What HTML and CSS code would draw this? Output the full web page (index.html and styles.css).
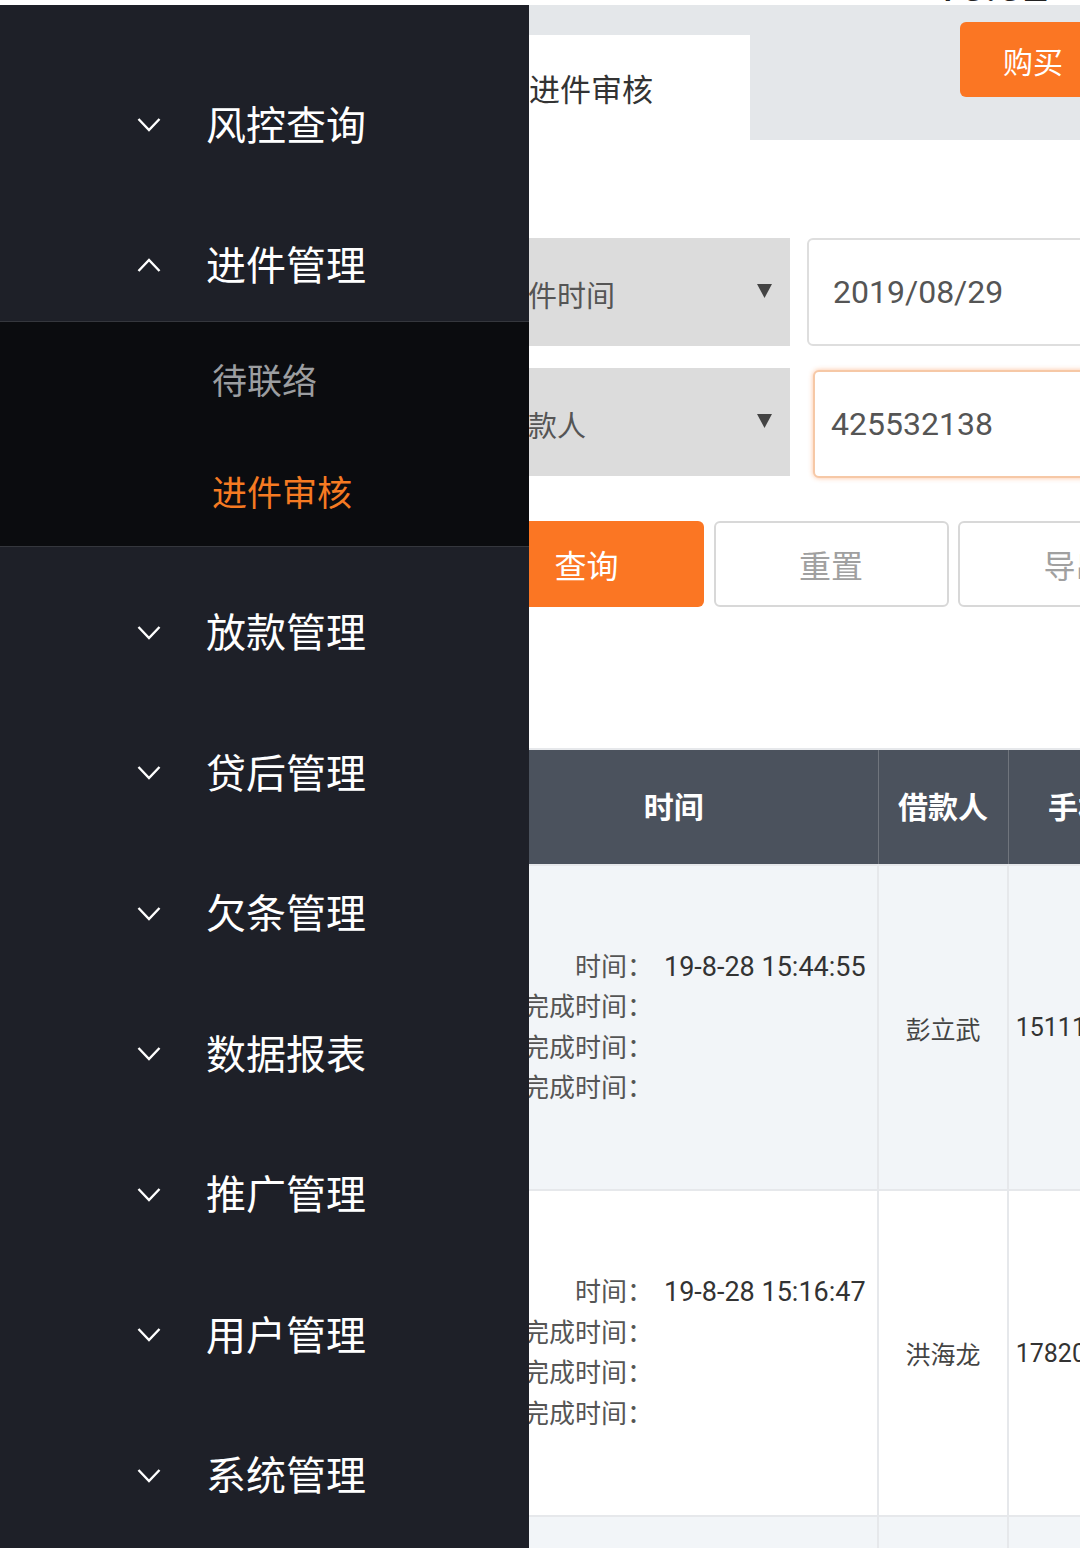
FILE: index.html
```html
<!DOCTYPE html>
<html lang="zh-CN">
<head>
<meta charset="utf-8">
<title>进件审核</title>
<link rel="stylesheet" href="styles.css">
</head>
<body>
<div class="status"><span class="clock">15:52</span></div>
<div class="app">
  <main class="main">
    <header class="tabs">
      <div class="tab">进件审核</div>
      <button class="buy">购买</button>
    </header>

    <section class="filters">
      <div class="frow">
        <div class="select"><span>进件时间</span><svg class="caret" width="15" height="14" viewBox="0 0 15 14"><path d="M0 0 H15 L7.5 14 Z" fill="#444"/></svg></div>
        <div class="input">2019/08/29</div>
      </div>
      <div class="frow second">
        <div class="select"><span>借款人</span><svg class="caret" width="15" height="14" viewBox="0 0 15 14"><path d="M0 0 H15 L7.5 14 Z" fill="#444"/></svg></div>
        <div class="input focus">425532138</div>
      </div>
      <div class="actions">
        <button class="btn primary">查询</button>
        <button class="btn">重置</button>
        <button class="btn">导出</button>
      </div>
    </section>

    <table class="grid">
      <colgroup><col class="c1"><col class="c2"><col class="c3"><col class="c4"></colgroup>
      <thead>
        <tr><th>时间</th><th>借款人</th><th>手机号</th><th>状态</th></tr>
      </thead>
      <tbody>
        <tr class="odd">
          <td>
            <div class="info">
              <span class="lbl">时间：</span><span class="val">19-8-28 15:44:55</span>
              <span class="lbl">初审完成时间：</span><span class="val"></span>
              <span class="lbl">复审完成时间：</span><span class="val"></span>
              <span class="lbl">终审完成时间：</span><span class="val"></span>
            </div>
          </td>
          <td class="name">彭立武</td>
          <td class="num">15111563284</td>
          <td class="name">待审核</td>
        </tr>
        <tr class="even">
          <td>
            <div class="info">
              <span class="lbl">时间：</span><span class="val">19-8-28 15:16:47</span>
              <span class="lbl">初审完成时间：</span><span class="val"></span>
              <span class="lbl">复审完成时间：</span><span class="val"></span>
              <span class="lbl">终审完成时间：</span><span class="val"></span>
            </div>
          </td>
          <td class="name">洪海龙</td>
          <td class="num">17820451367</td>
          <td class="name">待审核</td>
        </tr>
        <tr class="odd">
          <td>
            <div class="info">
              <span class="lbl">时间：</span><span class="val">19-8-28 14:52:10</span>
              <span class="lbl">初审完成时间：</span><span class="val"></span>
              <span class="lbl">复审完成时间：</span><span class="val"></span>
              <span class="lbl">终审完成时间：</span><span class="val"></span>
            </div>
          </td>
          <td class="name">李明</td>
          <td class="num">13800238810</td>
          <td class="name">待审核</td>
        </tr>
      </tbody>
    </table>
  </main>

  <nav class="sidebar">
    <div class="mtitle"><svg class="chev" width="24" height="15" viewBox="0 0 24 15"><path d="M1.5 2 L12 13 L22.5 2" fill="none" stroke="#fff" stroke-width="2.4"/></svg><span>风控查询</span></div>
    <div class="mtitle"><svg class="chev" width="24" height="15" viewBox="0 0 24 15"><path d="M1.5 13 L12 2 L22.5 13" fill="none" stroke="#fff" stroke-width="2.4"/></svg><span>进件管理</span></div>
    <div class="submenu">
      <div class="sitem">待联络</div>
      <div class="sitem active">进件审核</div>
    </div>
    <div class="mtitle after"><svg class="chev" width="24" height="15" viewBox="0 0 24 15"><path d="M1.5 2 L12 13 L22.5 2" fill="none" stroke="#fff" stroke-width="2.4"/></svg><span>放款管理</span></div>
    <div class="mtitle"><svg class="chev" width="24" height="15" viewBox="0 0 24 15"><path d="M1.5 2 L12 13 L22.5 2" fill="none" stroke="#fff" stroke-width="2.4"/></svg><span>贷后管理</span></div>
    <div class="mtitle"><svg class="chev" width="24" height="15" viewBox="0 0 24 15"><path d="M1.5 2 L12 13 L22.5 2" fill="none" stroke="#fff" stroke-width="2.4"/></svg><span>欠条管理</span></div>
    <div class="mtitle"><svg class="chev" width="24" height="15" viewBox="0 0 24 15"><path d="M1.5 2 L12 13 L22.5 2" fill="none" stroke="#fff" stroke-width="2.4"/></svg><span>数据报表</span></div>
    <div class="mtitle"><svg class="chev" width="24" height="15" viewBox="0 0 24 15"><path d="M1.5 2 L12 13 L22.5 2" fill="none" stroke="#fff" stroke-width="2.4"/></svg><span>推广管理</span></div>
    <div class="mtitle"><svg class="chev" width="24" height="15" viewBox="0 0 24 15"><path d="M1.5 2 L12 13 L22.5 2" fill="none" stroke="#fff" stroke-width="2.4"/></svg><span>用户管理</span></div>
    <div class="mtitle"><svg class="chev" width="24" height="15" viewBox="0 0 24 15"><path d="M1.5 2 L12 13 L22.5 2" fill="none" stroke="#fff" stroke-width="2.4"/></svg><span>系统管理</span></div>
  </nav>
</div>
</body>
</html>
```

FILE: styles.css
```css
* { box-sizing: border-box; }

html, body {
  margin: 0;
  padding: 0;
}

body {
  width: 1080px;
  height: 1548px;
  overflow: hidden;
  background: #fff;
  font-family: Roboto, "Noto Sans CJK SC", sans-serif;
  color: #333;
}

.status {
  height: 5px;
  background: #fff;
  overflow: hidden;
  display: flex;
  justify-content: flex-end;
}

.clock {
  font-size: 46px;
  line-height: 46px;
  margin-top: -38px;
  margin-right: 32px;
  color: #222;
  flex: 0 0 auto;
}

.app {
  position: relative;
  height: 1543px;
  overflow: hidden;
}

/* ---------- main content ---------- */
.main {
  width: 1080px;
}

.tabs {
  height: 135px;
  background: #e4e7ea;
  display: flex;
  align-items: flex-start;
  overflow: hidden;
}

.tab {
  flex: 0 0 auto;
  margin-left: 469px;
  margin-top: 30px;
  width: 281px;
  height: 105px;
  background: #fff;
  padding-left: 60px;
  display: flex;
  align-items: center;
  font-size: 31px;
  color: #333;
}

.buy {
  flex: 0 0 146px;
  margin-left: 210px;
  margin-top: 17px;
  height: 75px;
  border: 0;
  border-radius: 6px;
  background: #fb7623;
  color: #fff;
  font-family: inherit;
  font-size: 30px;
  padding: 0;
}

.filters {
  margin-left: 469px;
  padding-top: 98px;
}

.frow {
  display: flex;
  height: 108px;
}

.frow.second {
  margin-top: 22px;
}

.select {
  flex: 0 0 321px;
  height: 108px;
  background: #dcdcdc;
  display: flex;
  align-items: center;
  justify-content: space-between;
  padding: 4px 18px 0 30px;
  font-size: 29px;
  color: #555;
}

.caret {
  margin-top: -6px;
}

.input {
  flex: 0 0 420px;
  margin-left: 17px;
  height: 108px;
  border: 2px solid #dedede;
  border-radius: 6px;
  background: #fff;
  display: flex;
  align-items: center;
  padding-left: 24px;
  font-size: 32px;
  color: #555;
}

.input.focus {
  margin-left: 23px;
  margin-top: 2px;
  border-color: #f6c8a6;
  box-shadow: 0 0 5px rgba(251, 118, 35, 0.45);
  padding-left: 16px;
}

.actions {
  display: flex;
  gap: 9.5px;
  margin-top: 45px;
  height: 86px;
}

.btn {
  flex: 0 0 235px;
  height: 86px;
  border: 2px solid #d8d8d8;
  border-radius: 6px;
  background: #fff;
  color: #a0a0a0;
  font-family: inherit;
  font-size: 32px;
  padding: 0;
}

.btn.primary {
  border: 0;
  background: #fb7623;
  color: #fff;
}

/* ---------- table ---------- */
.grid {
  margin-left: 469px;
  margin-top: 141px;
  border-collapse: collapse;
  table-layout: fixed;
  width: 908px;
  border-top: 2px solid #e6e8eb;
}

.c1 { width: 408px; }
.c2 { width: 130px; }
.c3 { width: 170px; }
.c4 { width: 200px; }

.grid th {
  height: 116px;
  background: #4b525d;
  color: #fff;
  font-size: 30px;
  font-weight: 700;
  text-align: center;
  padding: 0 0 5px;
  border-right: 1px solid #70757d;
}

.grid td {
  padding: 0;
  border: 2px solid #e6e8eb;
  text-align: center;
  vertical-align: middle;
  font-size: 25px;
  color: #444;
}

.grid tr.odd td { background: #f2f5f8; height: 325px; }
.grid tr.even td { background: #fff; height: 326px; }

.grid td.num {
  font-size: 25px;
  color: #333;
  white-space: nowrap;
}

.info {
  display: grid;
  grid-template-columns: 182px auto;
  column-gap: 11px;
  text-align: left;
  line-height: 40.5px;
}

.info .lbl {
  text-align: right;
  font-size: 26px;
  color: #555;
  white-space: nowrap;
}

.info .val {
  font-size: 27px;
  color: #333;
  white-space: nowrap;
}

/* ---------- sidebar drawer (overlays the page) ---------- */
.sidebar {
  position: absolute;
  left: 0;
  top: 0;
  width: 529px;
  height: 100%;
  background: #1e2028;
  padding-top: 35px;
}

.mtitle {
  height: 116px;
  margin-top: 24.5px;
  display: flex;
  align-items: center;
  padding-left: 137px;
  color: #fff;
  font-size: 40px;
}

.mtitle.after {
  margin-top: 25px;
}

.chev {
  flex: 0 0 24px;
  margin-right: 45px;
  margin-top: 4px;
}

.submenu {
  background: #0b0c0f;
  border-top: 1px solid #35373d;
  border-bottom: 1px solid #35373d;
}

.sitem {
  height: 112px;
  display: flex;
  align-items: center;
  padding-left: 212px;
  font-size: 35px;
  color: #9c9ea1;
}

.sitem.active {
  color: #f57a22;
}
```
